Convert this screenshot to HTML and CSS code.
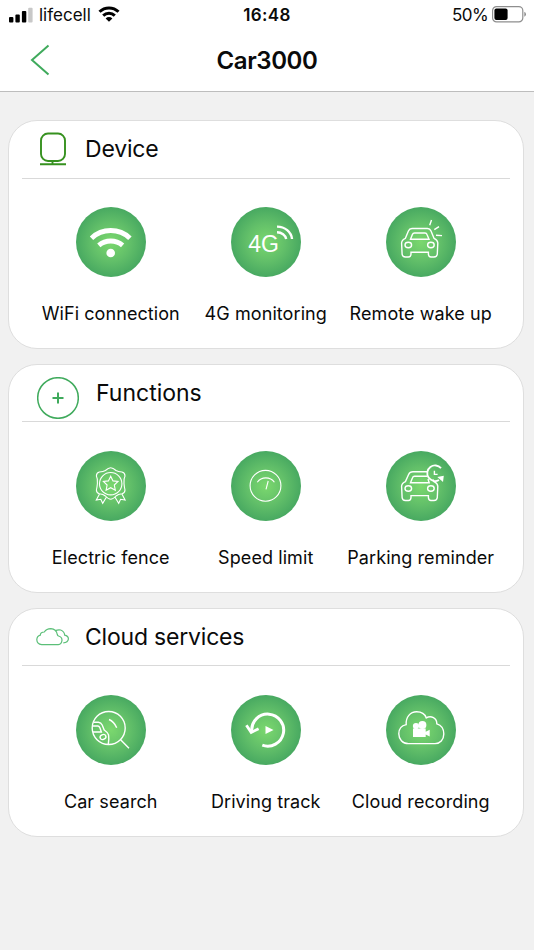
FILE: index.html
```html
<!DOCTYPE html>
<html lang="en">
<head>
  <meta charset="UTF-8">
  <meta name="viewport" content="width=device-width, initial-scale=1.0">
  <title>Car3000</title>
  <link rel="stylesheet" href="styles.css">
</head>
<body>

  <header class="header">
    <div class="status-bar">
      <div class="carrier">
        <svg width="25" height="16" viewBox="0 0 25 16">
          <rect x="0" y="10" width="4.4" height="5.5" rx="1"/>
          <rect x="6.4" y="7.5" width="4.4" height="8" rx="1"/>
          <rect x="12.9" y="4" width="4.4" height="11.5" rx="1"/>
          <rect x="19.2" y="0.7" width="4.4" height="14.8" rx="1" fill="#c8c8c8"/>
        </svg>
        <span class="carrier-name">lifecell</span>
        <svg class="wifi" width="22" height="16" viewBox="0 0 22 16" fill="none" stroke="#000" stroke-width="3">
          <path d="M1.5 5.8 A13.6 13.6 0 0 1 20.5 5.8"/>
          <path d="M5.2 9.6 A8.4 8.4 0 0 1 16.8 9.6"/>
          <path d="M7.6 12.4 A4.9 4.9 0 0 1 14.4 12.4 L11 15.8 Z" fill="#000" stroke="none"/>
        </svg>
      </div>
      <div class="time">16:48</div>
      <div class="battery">
        <span>50%</span>
        <svg width="35" height="17" viewBox="0 0 35 17">
          <rect x="0.6" y="0.6" width="30.2" height="15.3" rx="4" fill="none" stroke="#8e8e8e" stroke-width="1.2"/>
          <rect x="2.4" y="2.4" width="13.2" height="11.7" rx="2"/>
          <path d="M32.3 5.8 Q34 6.6 34 8.3 Q34 10 32.3 10.8 Z" fill="#8e8e8e"/>
        </svg>
      </div>
    </div>
    <div class="title-bar">
      <svg class="back" width="20" height="32" viewBox="0 0 20 32" fill="none" stroke="#3faa5c" stroke-width="2">
        <path d="M18.5 1.5 L2 16 L18.5 30.5"/>
      </svg>
      <h1>Car3000</h1>
    </div>
  </header>

  <main class="content">

    <section class="card">
      <div class="card-head device">
        <svg class="head-icon device-icon" width="28" height="34" viewBox="0 0 28 34" fill="none" stroke="#36911f" stroke-width="1.9">
          <rect x="2" y="1.5" width="24" height="27.5" rx="7"/>
          <path d="M13.5 29 V32 M1 32.3 H27"/>
        </svg>
        <h2>Device</h2>
      </div>
      <div class="items">
        <div class="item">
          <div class="circle">
            <svg viewBox="0 0 70 70">
              <path d="M15.5 31.2 A28 28 0 0 1 53.9 31.2" stroke-width="5"/>
              <path d="M22.8 38.3 A18.5 18.5 0 0 1 46.6 38.3" stroke-width="5"/>
              <circle class="solid" cx="34.7" cy="46" r="4.3"/>
            </svg>
          </div>
          <p>WiFi connection</p>
        </div>
        <div class="item">
          <div class="circle">
            <svg viewBox="0 0 70 70">
              <text x="17.3" y="44.8">4G</text>
              <path d="M46 19.6 A15 13.5 0 0 1 61 32 M46 25.2 A9.5 8 0 0 1 55.2 32" stroke-width="2.4"/>
            </svg>
          </div>
          <p>4G monitoring</p>
        </div>
        <div class="item">
          <div class="circle">
            <svg viewBox="0 0 70 70">
              <path d="M26 21.5 H41.4 Q44 21.7 45 24 L48 31.3 Q51.7 33 51.8 36 L51.3 47 Q51 50 48 50 H45 Q42.5 50 42.4 47 V45.2 H25 V47 Q24.9 50 22.4 50 H19.4 Q16.4 50 16.1 47 L15.6 36 Q15.7 33 19.4 31.3 L22.4 24 Q23.4 21.7 26 21.5 Z"/>
              <path d="M24.5 32.3 L26.4 27.5 Q27 26 28.5 26 H39 Q40.5 26 41 27.5 L43 32.3 Z"/>
              <ellipse cx="22.3" cy="38" rx="3.3" ry="2.7"/>
              <ellipse cx="44.9" cy="38" rx="3.3" ry="2.7"/>
              <path d="M43.7 18.3 L45.5 13 M48.3 22.7 L53 19.7 M50 28.3 L56 28.6"/>
            </svg>
          </div>
          <p>Remote wake up</p>
        </div>
      </div>
    </section>

    <section class="card">
      <div class="card-head functions">
        <svg class="head-icon plus-icon" width="42" height="42" viewBox="0 0 42 42" fill="none" stroke="#3faa5c">
          <circle cx="21" cy="21" r="20.3" stroke-width="1.5"/>
          <path d="M21 15.5 V26.5 M15.5 21 H26.5" stroke-width="2"/>
        </svg>
        <h2>Functions</h2>
      </div>
      <div class="items">
        <div class="item">
          <div class="circle">
            <svg viewBox="0 0 70 70" class="thin">
              <path d="M34.7 16.7 Q37 16.7 40 19.5 Q42 20.8 46 21 Q49 21.7 49 25 Q47.5 28 48 32.5 Q48.3 36 49 39 Q49 42 46 42.7 Q42 43 40 45 Q37 48.3 34.7 48.3 Q32.4 48.3 29.4 45 Q27.4 43 23.4 42.7 Q20.4 42 20.4 39 Q21.1 36 21.4 32.5 Q21.9 28 20.4 25 Q20.4 21.7 23.4 21 Q27.4 20.8 29.4 19.5 Q32.4 16.7 34.7 16.7 Z"/>
              <circle cx="34.7" cy="32.7" r="11.2"/>
              <path d="M34.7 25.2 L37 29.9 L42 30.5 L38.3 34 L39.3 39.2 L34.7 36.7 L30.1 39.2 L31.1 34 L27.4 30.5 L32.4 29.9 Z"/>
              <path d="M23.5 43 L20.3 49 L24.8 48.3 L26.7 52.3 L30.5 46 M45.9 43 L49.1 49 L44.6 48.3 L42.7 52.3 L38.9 46"/>
            </svg>
          </div>
          <p>Electric fence</p>
        </div>
        <div class="item">
          <div class="circle">
            <svg viewBox="0 0 70 70" class="thin">
              <circle cx="34.5" cy="34.8" r="15.4"/>
              <path d="M26.3 31.3 A10.5 10.5 0 0 1 43.4 31.3 M35 38.3 L37.2 30"/>
            </svg>
          </div>
          <p>Speed limit</p>
        </div>
        <div class="item">
          <div class="circle">
            <svg viewBox="0 0 70 70">
              <path d="M41 20.8 H27 Q23.8 20.8 22.6 23.5 L19.4 30.6 Q15.7 32.3 15.6 35.3 L16.1 46.5 Q16.4 49.5 19.4 49.5 H22.4 Q24.9 49.5 25 46.5 V44.6 H42.4 V46.5 Q42.5 49.5 45 49.5 H48 Q51 49.5 51.3 46.5 L51.8 35.3 Q51.7 32.3 48 30.6 L47 28.5"/>
              <path d="M41.5 25.3 H28.5 Q27 25.3 26.4 27 L24.5 31.8 H43.2 L42 28"/>
              <ellipse cx="22.3" cy="37.5" rx="3.3" ry="2.7"/>
              <ellipse cx="44.9" cy="37.5" rx="3.3" ry="2.7"/>
              <path d="M55 17.2 A7.8 7.8 0 1 0 53 29" stroke-width="1.8"/>
              <path d="M48.4 19.7 V23.4 H51.6"/>
              <path class="solid" d="M51.3 26 L57.8 24.8 L57 31 Z"/>
            </svg>
          </div>
          <p>Parking reminder</p>
        </div>
      </div>
    </section>

    <section class="card">
      <div class="card-head">
        <svg class="head-icon cloud-icon" width="34" height="20" viewBox="0 0 34 20" fill="none" stroke="#5bbf78" stroke-width="1.2">
          <path d="M5.7 17.6 Q1 17 0.8 12.7 Q1 9 4.3 8.2 Q4.3 5.2 8.3 5 Q10.5 1.8 14.8 1.7 Q20.3 2 21.3 7.5 Q21.6 8.8 22.5 9 Q26 9.8 26 13.2 Q25.6 17.2 22.3 17.6 Z"/>
          <path d="M19.3 3.6 Q22 2.5 24.7 3 Q28.3 4.3 28.7 8.2 Q32.4 9 32.4 12 Q32 15.6 27.3 15.8"/>
        </svg>
        <h2>Cloud services</h2>
      </div>
      <div class="items">
        <div class="item">
          <div class="circle">
            <svg viewBox="0 0 70 70">
              <circle cx="32.7" cy="33" r="16.5"/>
              <path d="M44.6 44.8 L53 53.3 M33 24.5 Q38 26.5 40.7 32.7"/>
              <path d="M17.5 27.3 H22.5 Q25 27.5 26.2 30 L28.2 35 Q32 37.5 32.6 40 Q33.2 44 32.3 49.2"/>
              <path d="M16.5 31 H22 Q23.3 31.2 24 33 L25.4 37 H17"/>
              <ellipse cx="27" cy="42" rx="3" ry="2.4" transform="rotate(-25 27 42)"/>
            </svg>
          </div>
          <p>Car search</p>
        </div>
        <div class="item">
          <div class="circle">
            <svg viewBox="0 0 70 70">
              <path d="M20.7 36 A16 16 0 1 1 31.3 50.2" stroke-width="3"/>
              <path d="M15.4 30.2 L20.2 37.4 L27.6 33.8" stroke-width="2.8"/>
              <path class="solid" d="M34.5 31 L42.5 35 L34.5 39 Z"/>
            </svg>
          </div>
          <p>Driving track</p>
        </div>
        <div class="item">
          <div class="circle">
            <svg viewBox="0 0 70 70">
              <path d="M22.5 48.6 C16.5 48.6 12.8 44 12.8 38.8 C12.8 34 15.8 30.5 20.2 29.6 C19.6 22 24.4 16.8 30.6 16.8 C35.5 16.8 39 19.2 40.3 22.9 C45 20 51 23 50.8 28.8 C55 30 57.8 34 57.8 39 C57.8 44.6 54 48.6 49 48.6 Z"/>
              <path class="solid" d="M27 33.5 H39.7 V36.8 L43.7 34.8 V41.5 L39.7 39.5 V42 H27 Z"/>
              <circle class="solid" cx="30" cy="31" r="3.1"/>
              <circle class="solid" cx="36.4" cy="29.9" r="4"/>
            </svg>
          </div>
          <p>Cloud recording</p>
        </div>
      </div>
    </section>

  </main>

</body>
</html>
```
FILE: styles.css
```css
* {
  box-sizing: border-box;
}

body {
  margin: 0;
  min-height: 950px;
  background-color: #f1f1f1;
  color: #0a0a0a;
  font-family: Inter, "Liberation Sans", sans-serif;
}

h1, h2, p {
  margin: 0;
}

.header {
  height: 92px;
  background: #fff;
  border-bottom: 1px solid #bdbdbd;
}

.status-bar {
  display: grid;
  grid-template-columns: 1fr auto 1fr;
  align-items: center;
  height: 30px;
  padding: 0 8px 0 9px;
  font-size: 17px;
}

.carrier,
.battery {
  display: flex;
  align-items: center;
}

.carrier-name {
  margin-left: 5px;
}

.wifi {
  margin: 0 0 2px 7px;
}

.time {
  margin-right: 1px;
  font-weight: 600;
  letter-spacing: 0.4px;
}

.battery {
  justify-content: flex-end;
  gap: 4px;
  margin-right: -1px;
}

.battery span {
  letter-spacing: -0.6px;
}

.battery svg {
  margin-bottom: 2px;
}

.title-bar {
  display: grid;
  grid-template-columns: 80px 1fr 80px;
  align-items: center;
  height: 61px;
}

.back {
  margin-left: 30px;
  margin-bottom: 1px;
}

.title-bar h1 {
  text-align: center;
  font-size: 24px;
  font-weight: 600;
  letter-spacing: -0.4px;
}

.content {
  display: flex;
  flex-direction: column;
  gap: 15px;
  padding: 28px 10.5px 0 8px;
}

.card {
  height: 229px;
  background: #fff;
  border: 1.5px solid #dedede;
  border-radius: 29px;
}

.card-head {
  display: flex;
  align-items: center;
  height: 57px;
  margin: 0 13px 1px;
  border-bottom: 1.5px solid #d9d9d9;
}

.card-head.device {
  height: 58px;
  margin-bottom: 0;
}

.card-head h2 {
  font-size: 23px;
  font-weight: 400;
  letter-spacing: -0.2px;
}

.card-head.device h2 {
  margin-bottom: 2px;
}

.card-head.functions h2 {
  letter-spacing: 0;
}

.head-icon {
  flex: none;
}

.device-icon {
  margin: 0 18px 2px 17px;
}

.plus-icon {
  margin: 10px 17px 0 15px;
}

.cloud-icon {
  margin: 0 15px 0 14px;
}

.items {
  display: grid;
  grid-template-columns: repeat(3, 155px);
  justify-content: center;
  padding-top: 28px;
}

.item {
  display: flex;
  flex-direction: column;
  align-items: center;
}

.circle {
  width: 70px;
  height: 70px;
  border-radius: 50%;
  background: radial-gradient(circle closest-side, #7bd86e 0%, #62bf69 55%, #48a961 100%);
}

.circle svg {
  display: block;
  fill: none;
  stroke: #fff;
  stroke-width: 1.4;
}

.circle svg.thin {
  stroke-width: 1.1;
}

.circle .solid {
  fill: #fff;
  stroke: none;
}

.circle text {
  fill: #fff;
  stroke: none;
  font-family: "Liberation Sans", Arial, sans-serif;
  font-size: 23px;
}

.item p {
  margin-top: 26px;
  font-size: 18px;
  line-height: 22px;
  letter-spacing: 0.08px;
  white-space: nowrap;
}
```
